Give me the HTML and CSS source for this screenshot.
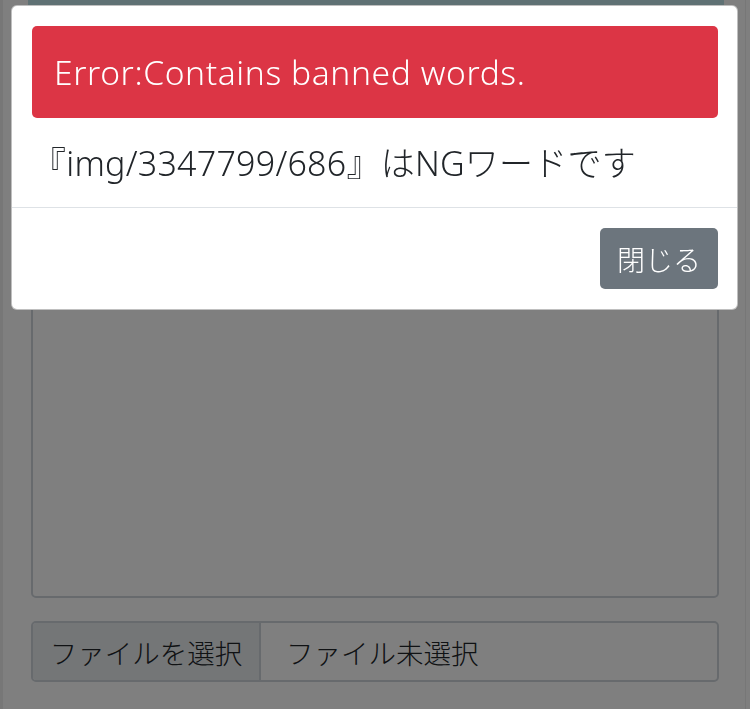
FILE: index.html
```html
<!DOCTYPE html>
<html lang="ja">
<head>
<meta charset="utf-8">
<title>Error</title>
<link rel="stylesheet" href="styles.css">
</head>
<body>
<div class="page">
  <div class="info-band"></div>
  <div class="textarea"></div>
  <div class="file-input">
    <span class="file-btn">ファイルを選択</span>
    <span class="file-name">ファイル未選択</span>
  </div>
</div>
<div class="backdrop"></div>
<div class="modal">
  <div class="modal-body">
    <div class="alert">Error:Contains banned words.</div>
    <p class="message">『img/3347799/686』はNGワードです</p>
  </div>
  <div class="modal-footer">
    <button class="btn-close">閉じる</button>
  </div>
</div>
</body>
</html>
```

FILE: styles.css
```css
* { box-sizing: border-box; }
html, body { margin: 0; height: 100%; }
body {
  background: #ffffff;
  font-family: "Noto Sans", "Noto Sans CJK JP", sans-serif;
  font-weight: 300;
  color: #212529;
  overflow: hidden;
}
.page {
  height: 709px;
  margin-right: 4px;
  border-left: 3px solid #eeeeee;
  border-right: 1px solid #eeeeee;
  padding: 0 26px 0 28px;
  display: flex;
  flex-direction: column;
}
.info-band {
  height: 120px;
  margin: 0 -5px 0 -3px;
  background: #bfe2e8;
  flex: none;
}
.textarea {
  margin-top: 20px;
  height: 458px;
  border: 2px solid #ced4da;
  border-radius: 5px;
  flex: none;
}
.file-input {
  margin-top: 23px;
  height: 61px;
  border: 2px solid #ced4da;
  border-radius: 5px;
  display: flex;
  font-size: 27.5px;
  overflow: hidden;
  flex: none;
}
.file-btn {
  width: 228px;
  background: #e9ecef;
  border-right: 2px solid #ced4da;
  display: flex;
  align-items: center;
  justify-content: center;
}
.file-name {
  display: flex;
  align-items: center;
  padding-left: 25px;
}
.backdrop {
  position: fixed;
  inset: 0;
  background: rgba(0, 0, 0, 0.5);
}
.modal {
  position: fixed;
  left: 11px;
  top: 5px;
  width: 727px;
  background: #ffffff;
  border: 1px solid rgba(0, 0, 0, 0.25);
  border-radius: 6px;
}
.modal-body {
  padding: 20px 19px 19px 20px;
}
.alert {
  height: 92px;
  background: #dc3545;
  color: #ffffff;
  border-radius: 5px;
  padding: 0 22px;
  display: flex;
  align-items: center;
  font-size: 33.6px;
  letter-spacing: 0.6px;
}
.message {
  margin: 20px 0 0;
  font-size: 34px;
  line-height: 50px;
  letter-spacing: 0.25px;
}
.modal-footer {
  border-top: 1px solid #dee2e6;
  padding: 20px 19px 20px 20px;
  display: flex;
  justify-content: flex-end;
}
.btn-close {
  height: 61px;
  width: 118px;
  border: 0;
  border-radius: 5px;
  background: #6c757d;
  color: #ffffff;
  font-family: "Noto Sans CJK JP", sans-serif;
  font-weight: 300;
  font-size: 28px;
  padding: 0;
}
```
